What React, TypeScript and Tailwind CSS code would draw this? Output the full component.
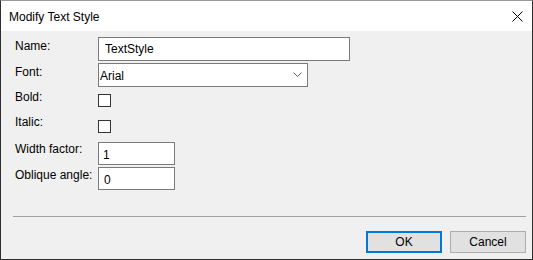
import * as React from "react"

const font = { fontFamily: '"Liberation Sans", Arial, sans-serif' }

function Checkbox() {
  return <span className="block size-[13px] border border-[#333333] bg-white" />
}

function TextField({ value, width, padLeft }: { value: string; width: string; padLeft: string }) {
  return (
    <div className={`${width} ${padLeft} flex h-[23px] items-center border border-[#7a7a7a] bg-white text-[12px] leading-[14px] text-black`}>
      {value}
    </div>
  )
}

function Button({ label, primary }: { label: string; primary?: boolean }) {
  return (
    <button
      className={
        primary
          ? "flex h-[22px] w-[76px] items-center justify-center border-2 border-[#0078d7] bg-[#e1e1e1] text-[12px] text-black"
          : "flex h-[22px] w-[76px] items-center justify-center border border-[#adadad] bg-[#e1e1e1] text-[12px] text-black"
      }
    >
      {label}
    </button>
  )
}

export default function App() {
  return (
    <div
      style={font}
      className="flex h-[260px] w-[533px] flex-col border border-[#2e2e2e] border-t-[#9a9a9a] bg-[#f0f0f0] text-[12px] leading-[14px] text-black"
    >
      {/* title bar */}
      <div className="flex h-[30px] items-center justify-between bg-white pl-[8px] pr-[9px]">
        <span className="pt-[1px]">Modify Text Style</span>
        <svg width="11" height="11" viewBox="0 0 11 11">
          <path d="M0.5 0.5 L10.5 10.5 M10.5 0.5 L0.5 10.5" stroke="#000" strokeWidth="1" />
        </svg>
      </div>

      {/* form */}
      <div className="flex flex-col pl-[14px] pt-[6px]">
        <div className="flex h-[24px]">
          <span className="w-[83px] pt-[2px]">Name:</span>
          <div className="flex h-[24px] w-[252px] items-center border border-[#7a7a7a] bg-white pl-[6px]">TextStyle</div>
        </div>
        <div className="mt-[2px] flex h-[24px]">
          <span className="w-[83px] pt-[2px]">Font:</span>
          <div className="flex h-[24px] w-[210px] items-center justify-between border border-[#7a7a7a] bg-white pl-[1px] pr-[5px]">
            <span className="pt-[2px]">Arial</span>
            <svg width="9" height="6" viewBox="0 0 9 6">
              <polyline points="0.5,0.5 4.5,4.5 8.5,0.5" fill="none" stroke="#606060" strokeWidth="1" />
            </svg>
          </div>
        </div>
        <div className="mt-[1px] flex h-[25px]">
          <span className="w-[83px] pt-[2px]">Bold:</span>
          <div className="pt-[6px]">
            <Checkbox />
          </div>
        </div>
        <div className="flex h-[28px]">
          <span className="w-[83px] pt-[2px]">Italic:</span>
          <div className="pt-[7px]">
            <Checkbox />
          </div>
        </div>
        <div className="flex h-[24px]">
          <span className="w-[83px] pt-[1px]">Width factor:</span>
          <div className="pt-[1px]">
            <TextField value="1" width="w-[77px]" padLeft="pl-[4px] pt-[3px]" />
          </div>
        </div>
        <div className="mt-[2px] flex h-[24px]">
          <span className="w-[83px] pt-[1px]">Oblique angle:</span>
          <TextField value="0" width="w-[77px]" padLeft="pl-[5px] pt-[3px]" />
        </div>
      </div>

      {/* separator */}
      <div className="ml-[12px] mr-[6px] mt-[25px] h-px bg-[#a0a0a0]" />

      {/* buttons */}
      <div className="mt-[14px] flex justify-end gap-[8px] pr-[6px]">
        <Button label="OK" primary />
        <Button label="Cancel" />
      </div>
    </div>
  )
}
